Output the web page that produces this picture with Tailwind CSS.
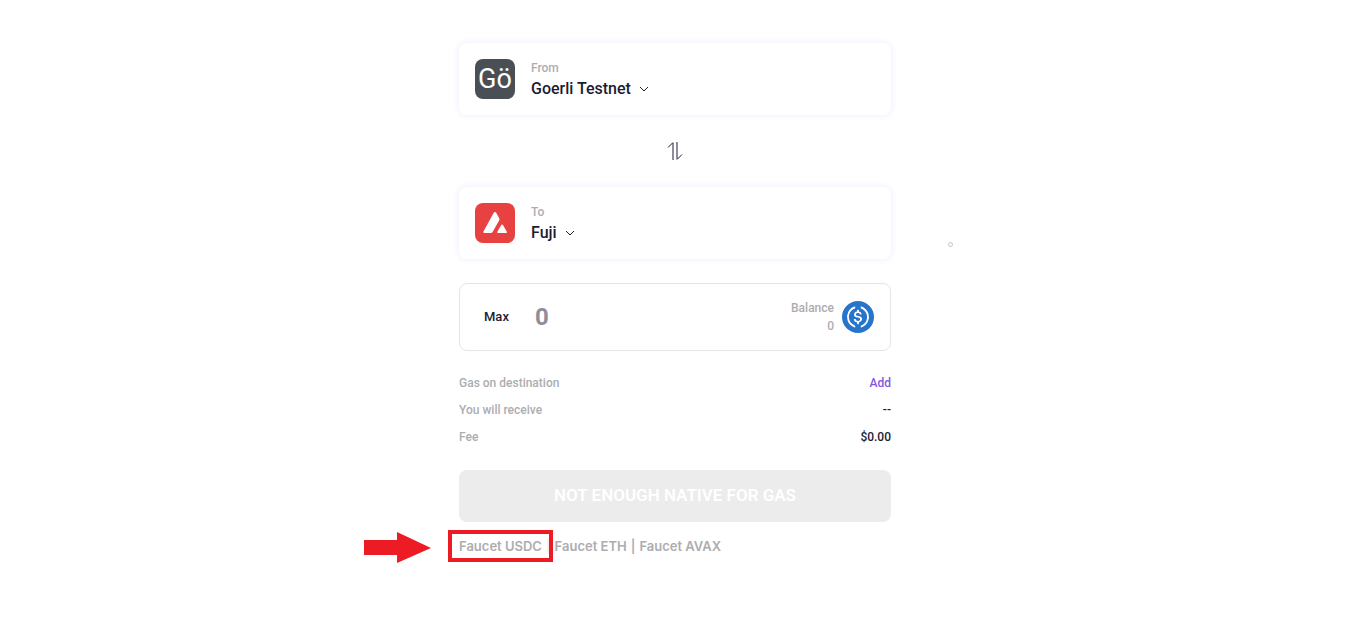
<!DOCTYPE html>
<html lang="en">
<head>
    <meta charset="UTF-8">
    <meta name="viewport" content="width=device-width, initial-scale=1.0">
    <title>Bridge</title>
    <script src="https://cdn.jsdelivr.net/npm/@tailwindcss/browser@4"></script>
</head>
<body class="bg-white pl-0.5 font-['Roboto','Liberation_Sans',sans-serif] font-medium text-[#1e1b33]">
    <main class="relative mx-auto w-full max-w-[432px] pt-[43px] pb-16">

        <section class="flex h-[72px] items-center gap-4 rounded-lg px-4 shadow-[0_0_6px_rgba(80,80,255,0.12)]">
            <div class="flex size-10 items-center justify-center rounded-lg bg-[#4a4f55] text-[27px] leading-none font-normal text-white">Gö</div>
            <div class="pt-0.5">
                <p id="from-label" class="text-xs leading-[18px] text-[#adadb0]">From</p>
                <button type="button" aria-describedby="from-label" class="flex items-center gap-2 text-base leading-6">
                    Goerli Testnet
                    <svg class="h-2 w-2.5" viewBox="0 0 10 8" fill="none" stroke="currentColor"><path d="M1 2l4 4 4-4"/></svg>
                </button>
            </div>
        </section>

        <div class="flex h-[72px] items-center justify-center">
            <button type="button" aria-label="Switch networks">
                <svg class="size-5" viewBox="0 0 20 20" fill="none">
                    <path d="M8 2v17M12 1v17" stroke="#8f8d99" stroke-width="2"/>
                    <path d="M8 1.500L3 6.500M12 18.500l5-5" stroke="#1e1b33"/>
                </svg>
            </button>
        </div>

        <section class="flex h-[72px] items-center gap-4 rounded-lg px-4 shadow-[0_0_6px_rgba(80,80,255,0.12)]">
            <svg class="size-10 rounded-lg bg-[#e84142]" viewBox="0 0 40 40" fill="#fff">
                <path d="M18.600 10c.7-1.200 2-1.200 2.700 0l2.800 5c.5.900.5 1.700 0 2.600L17.600 29c-.5.800-1 1.100-2 1.100H9.700c-1.200 0-1.700-.9-1.100-1.900z"/>
                <path d="M26.100 22.200c.5-.9 1.500-.9 2 0l3.600 6.200c.5.900.1 1.700-.9 1.700h-7.400c-1 0-1.500-.8-.9-1.700z"/>
            </svg>
            <div class="pt-0.5">
                <p id="to-label" class="text-xs leading-[18px] text-[#adadb0]">To</p>
                <button type="button" aria-describedby="to-label" class="flex items-center gap-2 text-base leading-6">
                    Fuji
                    <svg class="h-2 w-2.5" viewBox="0 0 10 8" fill="none" stroke="currentColor"><path d="M1 2l4 4 4-4"/></svg>
                </button>
            </div>
        </section>

        <section class="mt-6 flex h-[68px] items-center rounded-lg border border-[#e5e5e7] pr-4 pl-6">
            <button type="button" class="text-[13px] leading-4">Max</button>
            <input type="text" inputmode="decimal" aria-label="Amount" placeholder="0" class="ml-[26px] min-w-0 flex-1 text-2xl font-bold placeholder:text-[#8f8d99] focus:outline-none">
            <div class="text-right text-xs leading-[18px] text-[#adadb0]">
                <p>Balance</p>
                <p>0</p>
            </div>
            <svg class="ml-2 size-8" viewBox="0 0 32 32" aria-label="USDC">
                <circle cx="16" cy="16" r="16" fill="#2775ca"/>
                <path fill="#fff" d="M20.022 18.124c0-2.124-1.280-2.852-3.840-3.156-1.828-.243-2.193-.728-2.193-1.578 0-.85.610-1.396 1.828-1.396 1.097 0 1.707.364 2.011 1.275a.458.458 0 00.427.303h.975a.416.416 0 00.427-.425v-.060a3.040 3.040 0 00-2.743-2.489V9.142c0-.243-.183-.425-.487-.486h-.915c-.243 0-.426.182-.487.486v1.396c-1.829.242-2.986 1.456-2.986 2.974 0 2.002 1.218 2.791 3.778 3.095 1.707.303 2.255.668 2.255 1.639 0 .97-.853 1.638-2.011 1.638-1.585 0-2.133-.667-2.316-1.578-.060-.242-.244-.364-.427-.364h-1.036a.416.416 0 00-.426.425v.060c.243 1.518 1.219 2.610 3.230 2.914v1.457c0 .242.183.425.487.485h.915c.243 0 .426-.182.487-.485V21.340c1.829-.303 3.047-1.578 3.047-3.217z"/>
                <path fill="#fff" d="M12.892 24.497c-4.754-1.700-7.192-6.980-5.424-11.653.914-2.550 2.925-4.491 5.424-5.402.244-.121.365-.303.365-.607v-.850c0-.242-.121-.424-.365-.485-.061 0-.183 0-.244.060a10.895 10.895 0 00-7.130 13.717c1.096 3.400 3.717 6.010 7.130 7.102.244.121.488 0 .548-.243.061-.060.061-.122.061-.243v-.850c0-.182-.182-.424-.365-.546zm6.460-18.936c-.244-.122-.488 0-.548.242-.061.061-.061.122-.061.243v.850c0 .243.182.485.365.607 4.754 1.700 7.192 6.980 5.424 11.653-.914 2.550-2.925 4.491-5.424 5.402-.244.121-.365.303-.365.607v.850c0 .242.121.424.365.485.061 0 .183 0 .244-.060a10.895 10.895 0 007.130-13.717c-1.096-3.460-3.778-6.070-7.130-7.162z"/>
            </svg>
        </section>

        <dl class="mt-6 flex flex-col gap-[11px] text-xs leading-4">
            <div class="flex justify-between">
                <dt class="text-[#adadb0]">Gas on destination</dt>
                <dd><button type="button" class="text-[#8358e0]">Add</button></dd>
            </div>
            <div class="flex justify-between">
                <dt class="text-[#adadb0]">You will receive</dt>
                <dd>--</dd>
            </div>
            <div class="flex justify-between">
                <dt class="text-[#adadb0]">Fee</dt>
                <dd>$0.00</dd>
            </div>
        </dl>

        <button type="button" disabled class="mt-[25px] h-[52px] w-full rounded-lg bg-[#ececec] text-[17px] font-semibold text-white">NOT ENOUGH NATIVE FOR GAS</button>

        <nav class="mt-3.5 flex gap-1 font-['Inter',sans-serif] text-[13px] leading-5 font-semibold text-[#adadb0]">
            <div class="relative">
                <a href="#">Faucet USDC</a>
                <!-- callout: frame and arrow -->
                <div class="pointer-events-none absolute -top-1.5 -left-[11px] z-10 h-8 w-[105px] border-4 border-[#ed1c24]"></div>
                <svg class="pointer-events-none absolute -top-1 -left-[95px] h-8 w-[67px]" viewBox="0 0 67 32" fill="#ed1c24"><path d="M0 8h33V0l34 16-34 15v-8H0z"/></svg>
            </div>
            <span class="text-[#ececee]">|</span>
            <a href="#">Faucet ETH</a>
            <span>|</span>
            <a href="#">Faucet AVAX</a>
        </nav>

        <span class="absolute top-[242px] -right-[62px] size-[5px] rounded-full border border-[#c3c1d2]"></span>
    </main>
</body>
</html>
